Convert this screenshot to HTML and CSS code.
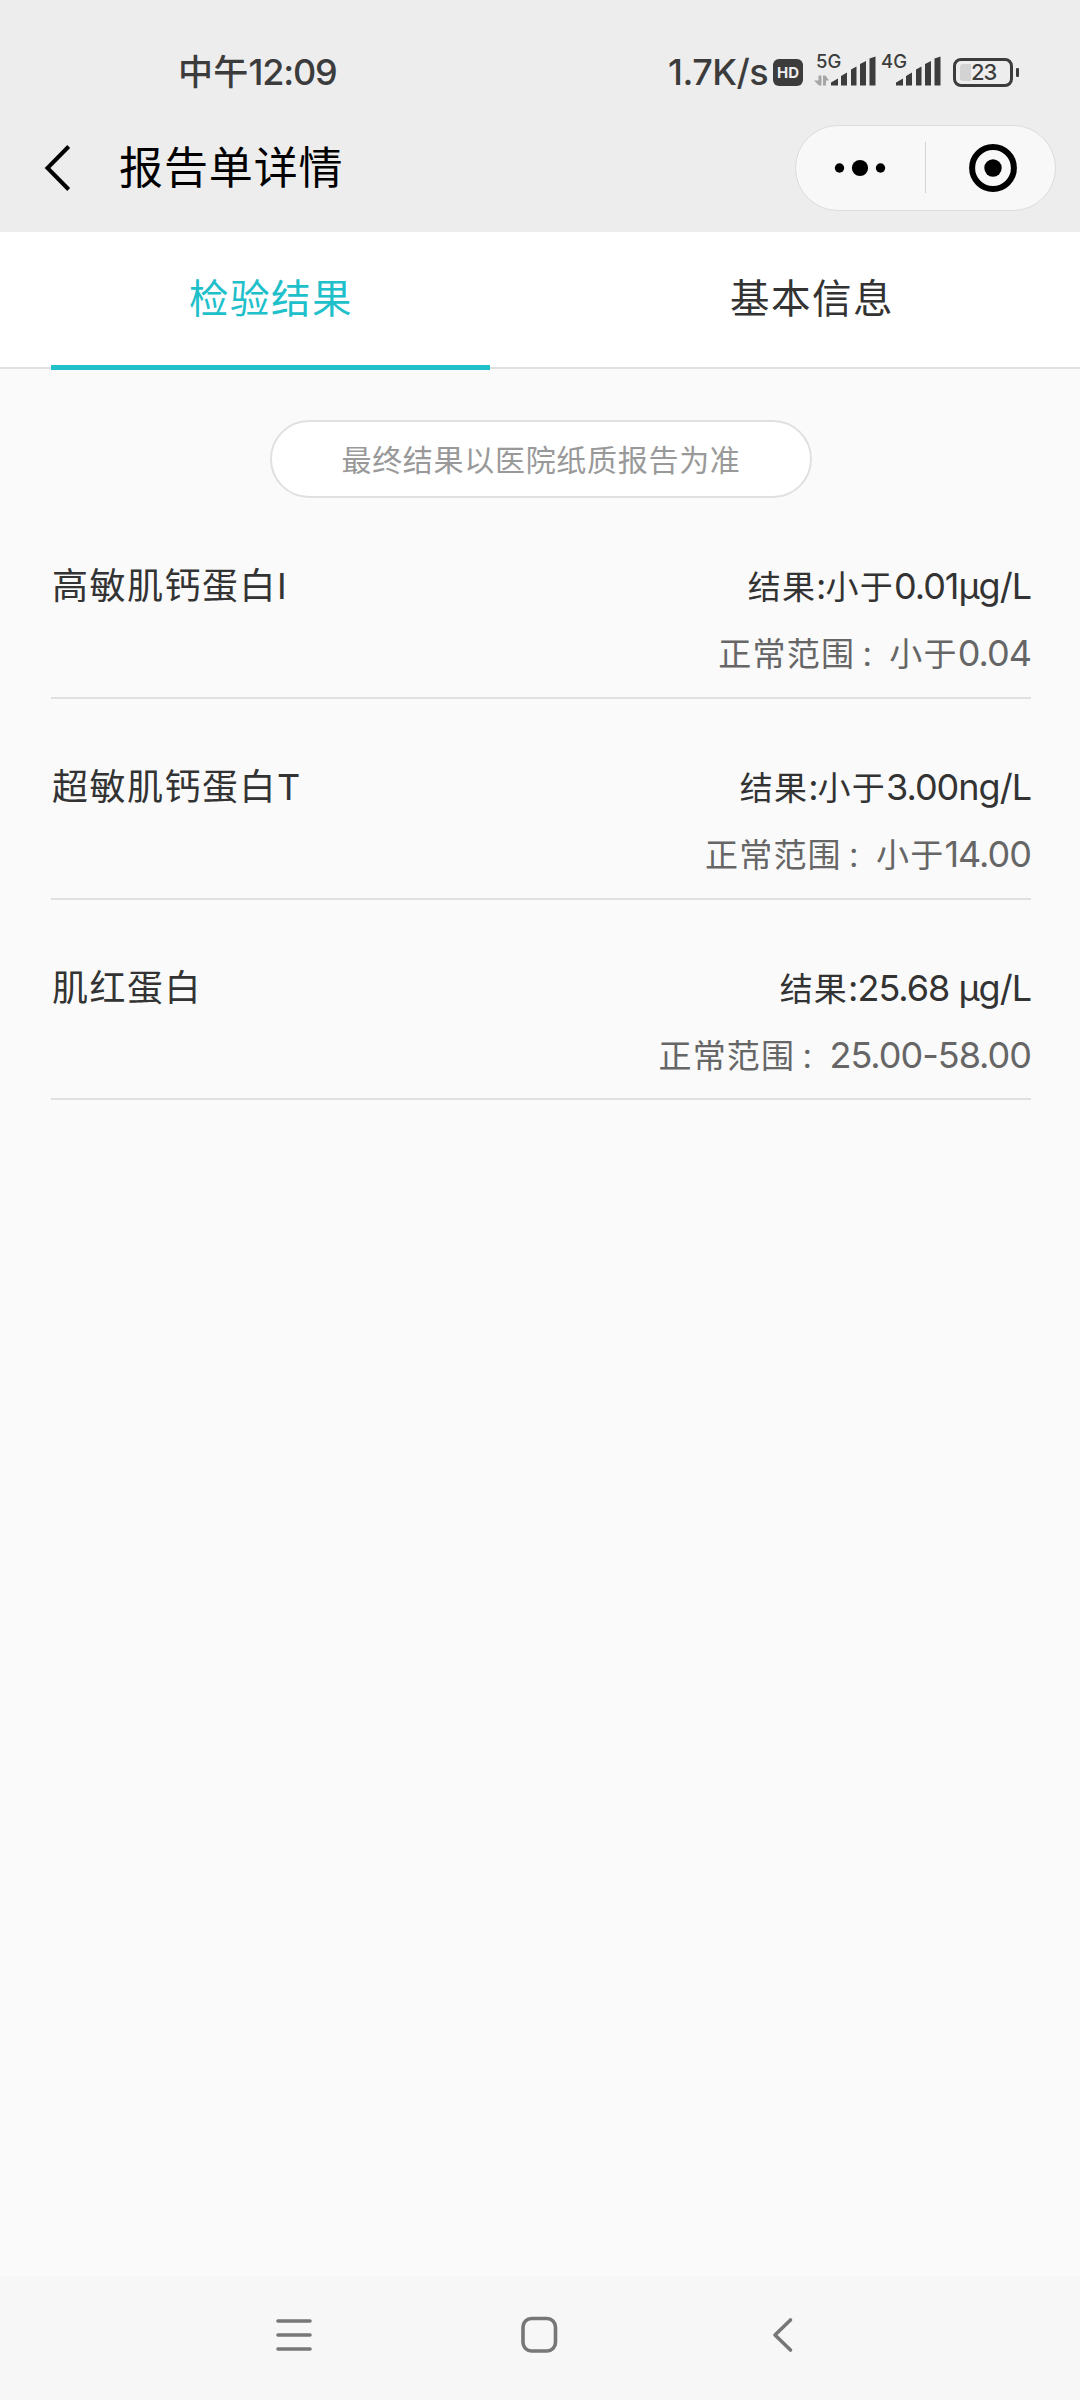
FILE: index.html
```html
<!DOCTYPE html>
<html lang="zh-CN">
<head>
<meta charset="utf-8">
<title>报告单详情</title>
<link rel="stylesheet" href="styles.css">
</head>
<body>
<div class="screen">
  <header class="header">
    <div class="status">
      <span class="clock"><span class="clock-cn">中午</span>12:09</span>
      <div class="indicators">
        <span class="speed">1.7K/s</span>
        <span class="hd">HD</span>
        <div class="signal signal-5g">
          <span class="gen">5G</span>
          <svg class="bars" width="62" height="30" viewBox="0 0 62 30">
            <path fill="#a5a5a5" d="M4.500 18.500h3v10h-2.500L0 23.500h4.500zM9 18.500h2.500l3.500 5h-3v5H9z"/>
            <path fill="#3c3c3c" d="M17 25.500l7-4v7h-7zM27 19l6-3.500v13h-6zM37 12.500l5.500-3v19H37zM46 7l6-3v24.500h-6zM55.500 1.500l6-2v29h-6z"/>
          </svg>
        </div>
        <div class="signal signal-4g">
          <span class="gen">4G</span>
          <svg class="bars" width="62" height="30" viewBox="0 0 62 30">
            <path fill="#3c3c3c" d="M17 25.500l7-4v7h-7zM27 19l6-3.500v13h-6zM37 12.500l5.500-3v19H37zM46 7l6-3v24.500h-6zM55.500 1.500l6-2v29h-6z"/>
          </svg>
        </div>
        <div class="battery"><span class="level"></span><span class="percent">23</span></div>
        <span class="battery-tip"></span>
      </div>
    </div>
    <div class="titlebar">
      <svg class="back" width="28" height="50" viewBox="0 0 28 50"><path d="M24.700 3.500L3.500 25l21.200 21.500" fill="none" stroke="#000" stroke-width="4"/></svg>
      <h1 class="title">报告单详情</h1>
      <div class="capsule">
        <svg class="more" width="52" height="18" viewBox="0 0 52 18"><circle cx="5.500" cy="9" r="4.700"/><circle cx="26" cy="9" r="8.100"/><circle cx="46.500" cy="9" r="4.700"/></svg>
        <span class="divider"></span>
        <svg class="target" width="48" height="48" viewBox="0 0 48 48"><circle cx="24" cy="24" r="20.900" fill="none" stroke="#000" stroke-width="6"/><circle cx="24" cy="24" r="8.700"/></svg>
      </div>
    </div>
  </header>

  <nav class="tabs">
    <a class="tab active">检验结果</a>
    <a class="tab">基本信息</a>
  </nav>

  <main class="content">
    <p class="notice">最终结果以医院纸质报告为准</p>
    <section class="item">
      <h2 class="name">高敏肌钙蛋白<span class="latin">I</span></h2>
      <div class="values">
        <p class="result">结果<span class="latin">:</span>小于<span class="latin">0.01µg/L</span></p>
        <p class="range">正常范围<span class="colon">：</span>小于<span class="latin">0.04</span></p>
      </div>
    </section>
    <section class="item">
      <h2 class="name">超敏肌钙蛋白<span class="latin">T</span></h2>
      <div class="values">
        <p class="result">结果<span class="latin">:</span>小于<span class="latin">3.00ng/L</span></p>
        <p class="range">正常范围<span class="colon">：</span>小于<span class="latin">14.00</span></p>
      </div>
    </section>
    <section class="item">
      <h2 class="name">肌红蛋白</h2>
      <div class="values">
        <p class="result">结果<span class="latin">:25.68 µg/L</span></p>
        <p class="range">正常范围<span class="colon">：</span><span class="latin">25.00-58.00</span></p>
      </div>
    </section>
  </main>

  <footer class="navbar">
    <svg class="nav-icon" width="40" height="40" viewBox="0 0 40 40"><path d="M4 6h32M4 20h32M4 34h32"/></svg>
    <svg class="nav-icon" width="40" height="40" viewBox="0 0 40 40"><rect x="4" y="3.500" width="32.500" height="32.500" rx="8.500"/></svg>
    <svg class="nav-icon" width="40" height="40" viewBox="0 0 40 40"><path d="M26.500 5L11 20 26.500 35"/></svg>
  </footer>
</div>
</body>
</html>
```
FILE: styles.css
```css
* {
  box-sizing: border-box;
}

body,
h1,
h2,
p {
  margin: 0;
  font-weight: 400;
}

body {
  font-family: Inter, "Noto Sans CJK SC", sans-serif;
  color: #333;
  white-space: nowrap;
}

svg {
  display: block;
  flex: none;
}

.screen {
  display: flex;
  flex-direction: column;
  width: 1080px;
  height: 2400px;
  background: #fafafa;
}

.header {
  height: 232px;
  background: #ededed;
}

.status {
  display: flex;
  justify-content: space-between;
  align-items: center;
  height: 124px;
  padding: 20px 61px 0 178px;
  color: #3c3c3c;
  font-weight: 500;
}

.clock {
  font-size: 36px;
  line-height: 52px;
  letter-spacing: -1.200px;
}

.clock-cn {
  font-size: 35px;
  letter-spacing: 0.300px;
}

.indicators {
  display: flex;
  align-items: center;
  height: 52px;
}

.speed {
  width: 105px;
  font-size: 36px;
  line-height: 52px;
  letter-spacing: -0.5px;
}

.hd {
  width: 30px;
  height: 27px;
  border-radius: 6px;
  background: #3c3c3c;
  color: #ededed;
  font-size: 15px;
  font-weight: 700;
  line-height: 27px;
  text-align: center;
}

.signal {
  position: relative;
  width: 62px;
  height: 30px;
}

.signal-5g {
  margin-left: 11px;
}

.signal-4g {
  margin-left: 3px;
}

.gen {
  position: absolute;
  top: -7px;
  left: 2px;
  font-size: 18.500px;
  line-height: 22px;
}

.bars {
  overflow: visible;
}

.battery {
  display: flex;
  align-items: center;
  width: 60px;
  height: 29px;
  margin-left: 12px;
  padding-left: 4px;
  border: 3px solid #3c3c3c;
  border-radius: 8px;
}

.level {
  width: 11px;
  height: 17px;
  border-radius: 3px 0 0 3px;
  background: #d3d3d3;
}

.percent {
  font-size: 22px;
  line-height: 23px;
  letter-spacing: -1px;
}

.battery-tip {
  width: 3px;
  height: 9px;
  margin-left: 3px;
  border-radius: 1px;
  background: #3c3c3c;
}

.titlebar {
  display: flex;
  align-items: center;
  height: 87px;
  padding: 0 24px 0 44px;
}

.title {
  margin-left: 47px;
  color: #000;
  font-size: 44px;
  line-height: 64px;
  letter-spacing: 0.900px;
}

.capsule {
  display: flex;
  align-items: center;
  width: 261px;
  height: 86px;
  margin-left: auto;
  padding-left: 38px;
  border: 1px solid #dcdcdc;
  border-radius: 43px;
  background: #f8f8f8;
}

.divider {
  width: 1px;
  height: 51px;
  margin: 0 43px 0 39px;
  background: #d4d4d4;
}

.tabs {
  display: flex;
  height: 137px;
  border-bottom: 2px solid #dfe1e1;
  background: #fff;
}

.tab {
  flex: 1;
  height: 138px;
  padding-left: 4px;
  color: #333;
  font-size: 39.500px;
  line-height: 135px;
  letter-spacing: 1.500px;
  text-align: center;
}

.tab.active {
  flex: none;
  width: 439px;
  margin: 0 50px 0 51px;
  padding-left: 1px;
  border-bottom: 5px solid #20c0ca;
  color: #20c0ca;
}

.content {
  flex: 1;
  padding: 51px 49px 0 51px;
}

.notice {
  width: 542px;
  height: 78px;
  margin: 0 auto;
  border: 2px solid #dfe1e1;
  border-radius: 39px;
  background: #fff;
  color: #999;
  font-size: 30px;
  line-height: 76px;
  letter-spacing: 0.700px;
  text-align: center;
}

.item {
  display: flex;
  justify-content: space-between;
  height: 201px;
  padding-top: 55px;
  border-bottom: 2px solid #dfe1e1;
}

.item:last-child {
  height: 200px;
}

.name {
  margin-left: 1px;
  font-size: 36px;
  line-height: 67px;
  letter-spacing: 1.500px;
}

.values {
  font-size: 33px;
  line-height: 66px;
  letter-spacing: 1.200px;
  text-align: right;
}

.range {
  color: #666;
}

.colon {
  padding-left: 5px;
  font-size: 28px;
}

.latin {
  font-size: 36px;
  letter-spacing: -1px;
}

.navbar {
  display: flex;
  gap: 205px;
  height: 124px;
  padding: 39px 0 0 274px;
  background: #f7f7f7;
}

.nav-icon {
  fill: none;
  stroke: #777;
  stroke-width: 3.600px;
  stroke-linecap: round;
  stroke-linejoin: round;
}
```
